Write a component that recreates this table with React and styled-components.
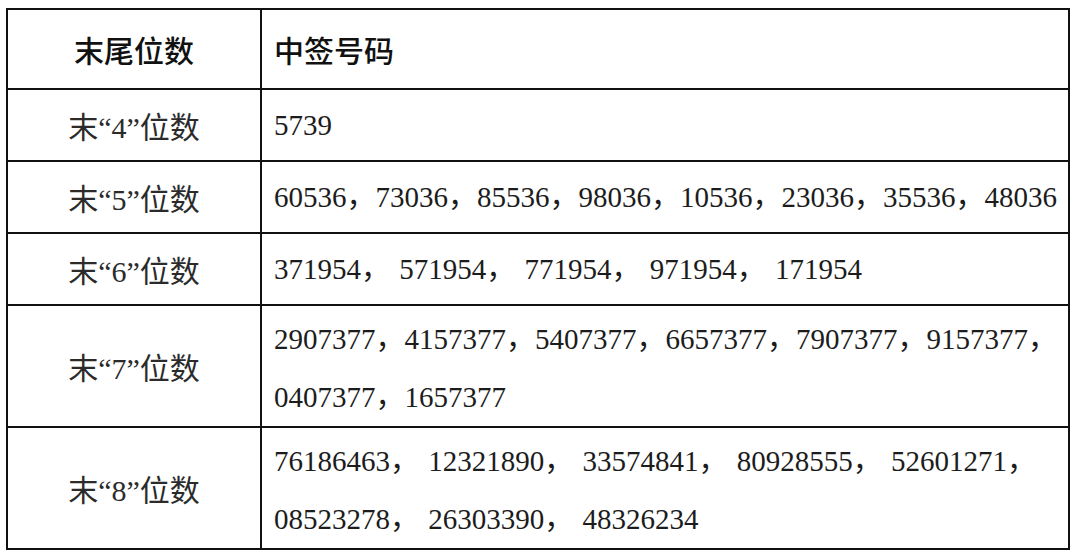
import React from 'react';
import styled, { createGlobalStyle } from 'styled-components';

const GlobalStyle = createGlobalStyle`
  html, body {
    margin: 0;
    padding: 0;
    background: #ffffff;
  }
`;

const Page = styled.div`
  padding: 8px 10px 0 6px;
`;

const Table = styled.table`
  width: 1064px;
  border-collapse: collapse;
  table-layout: fixed;
  border: 2px solid #111;
  color: #1c1c1c;
`;

const Row = styled.tr`
  height: ${(props) => props.$h}px;
`;

const KeyCell = styled.td`
  border: 2px solid #111;
  text-align: center;
  vertical-align: middle;
  font-family: 'Liberation Serif', 'Noto Sans CJK SC', serif;
  font-size: 30px;
  font-weight: 400;
  color: #2b2b2b;
  padding: 0;
`;

const ValueCell = styled.td`
  border: 2px solid #111;
  vertical-align: middle;
  font-family: 'Liberation Serif', 'Noto Sans CJK SC', serif;
  font-size: 29px;
  font-weight: 400;
  word-spacing: ${(props) => (props.$spaced ? '2px' : '0')};
  padding: ${(props) => (props.$multi ? '4px 8px 0 12px' : '0 8px 0 12px')};
  white-space: nowrap;
`;

const Line = styled.div`
  height: ${(props) => (props.$multi ? 58 : 60)}px;
  line-height: ${(props) => (props.$multi ? 58 : 60)}px;
`;

const HeadCell = styled.th`
  border: 2px solid #111;
  font-family: 'Noto Sans CJK SC', sans-serif;
  font-size: 30px;
  font-weight: 500;
  color: #111;
  text-align: ${(props) => (props.$left ? 'left' : 'center')};
  padding: ${(props) => (props.$left ? '0 0 0 12px' : '0')};
  vertical-align: middle;
`;

const rows = [
  { key: '4', h: 72, lines: ['5739'] },
  {
    key: '5',
    h: 72,
    lines: ['60536，73036，85536，98036，10536，23036，35536，48036'],
  },
  {
    key: '6',
    h: 72,
    spaced: true,
    lines: ['371954， 571954， 771954， 971954， 171954'],
  },
  {
    key: '7',
    h: 122,
    lines: [
      '2907377，4157377，5407377，6657377，7907377，9157377，',
      '0407377，1657377',
    ],
  },
  {
    key: '8',
    h: 121,
    spaced: true,
    lines: [
      '76186463， 12321890， 33574841， 80928555， 52601271，',
      '08523278， 26303390， 48326234',
    ],
  },
];

export default function App() {
  return (
    <Page>
      <GlobalStyle />
      <Table>
        <colgroup>
          <col style={{ width: 254 }} />
          <col />
        </colgroup>
        <thead>
          <Row $h={80}>
            <HeadCell>末尾位数</HeadCell>
            <HeadCell $left>中签号码</HeadCell>
          </Row>
        </thead>
        <tbody>
          {rows.map((r) => {
            const multi = r.lines.length > 1;
            return (
              <Row key={r.key} $h={r.h}>
                <KeyCell>末“{r.key}”位数</KeyCell>
                <ValueCell $multi={multi} $spaced={r.spaced}>
                  {r.lines.map((l, i) => (
                    <Line key={i} $multi={multi}>
                      {l}
                    </Line>
                  ))}
                </ValueCell>
              </Row>
            );
          })}
        </tbody>
      </Table>
    </Page>
  );
}
